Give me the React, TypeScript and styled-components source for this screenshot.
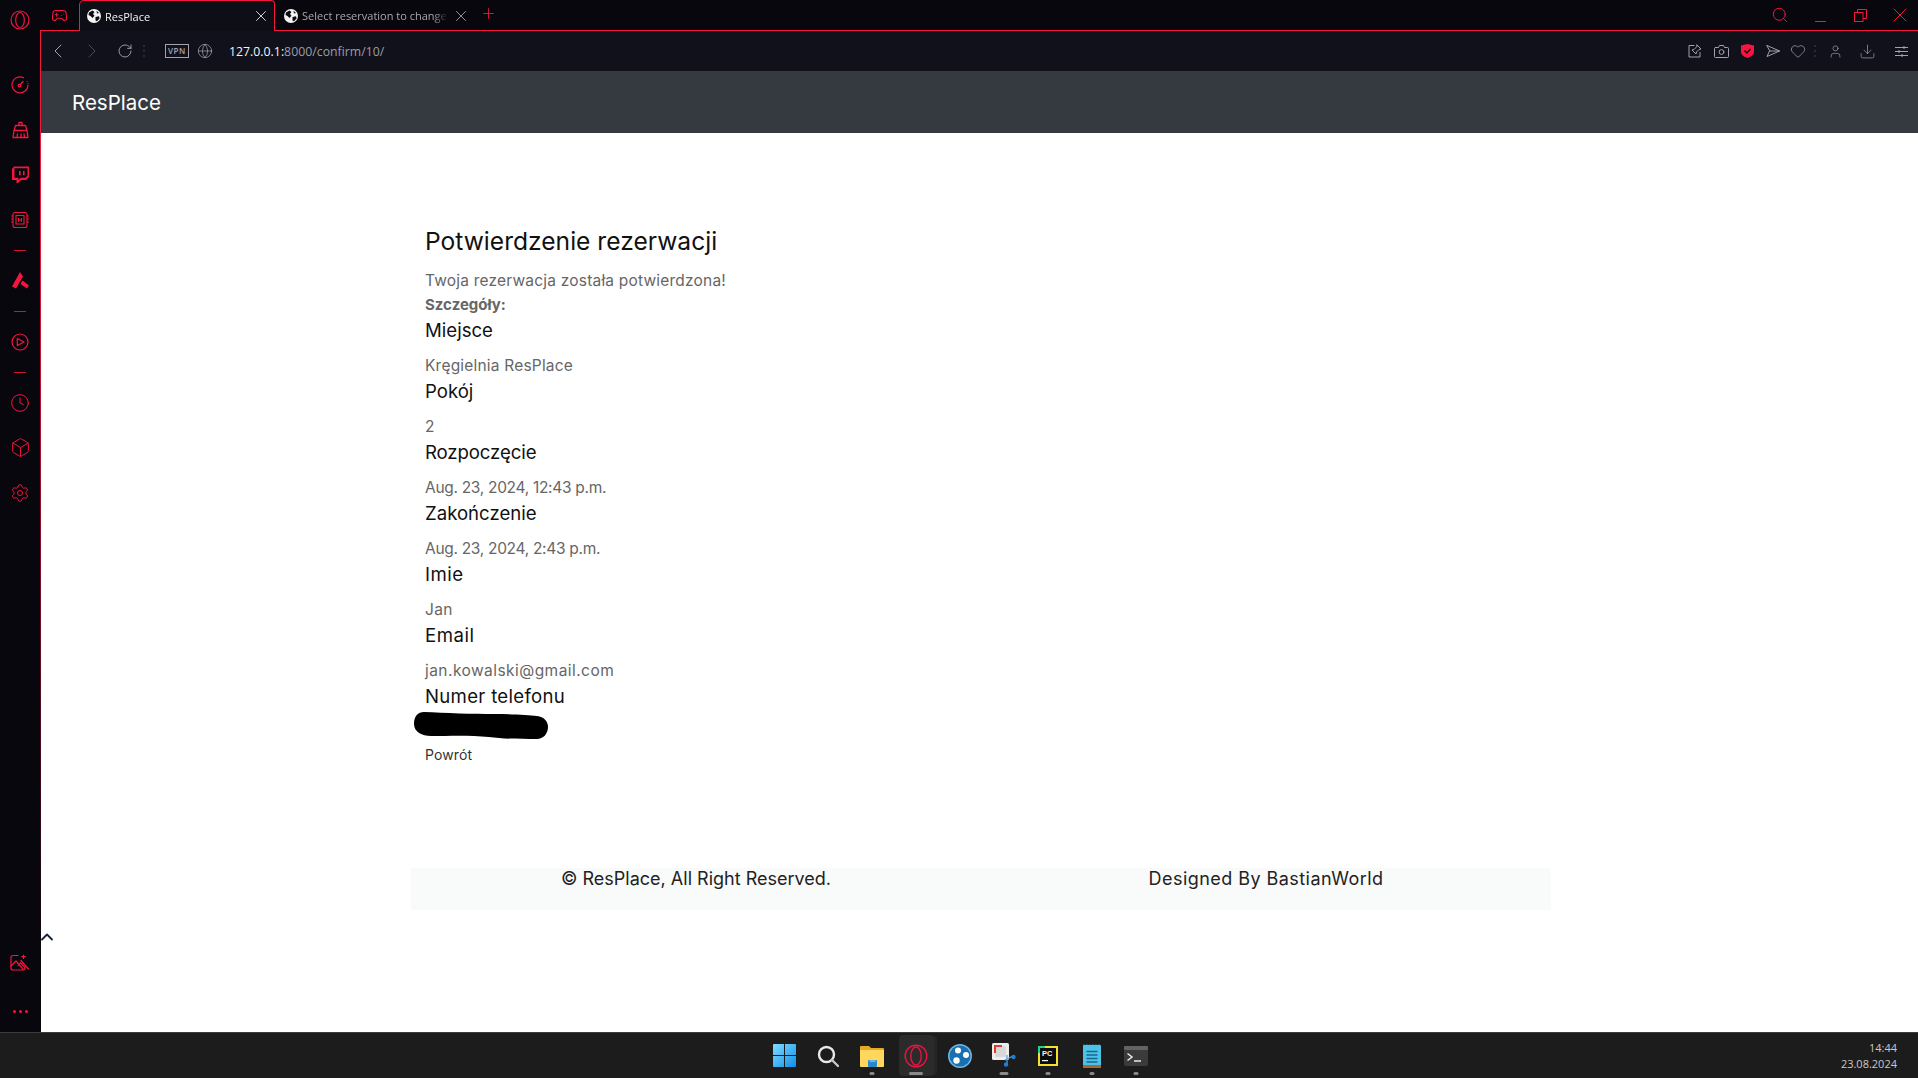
import React from "react";
import styled, { createGlobalStyle } from "styled-components";
import {
  Box,
  ChevronLeft,
  ChevronRight,
  ChevronUp,
  Clock,
  Download,
  Gamepad2,
  Globe,
  Heart,
  Plus,
  RotateCw,
  Search,
  Settings,
  User,
  X,
} from "lucide-react";

const RED = "#f5153f";
const POPPINS = `"Inter", "Liberation Sans", sans-serif`;
const SEGOE = `"Open Sans", "Liberation Sans", sans-serif`;

const GlobalStyle = createGlobalStyle`
  html, body { margin: 0; padding: 0; background: #fff; }
  #root { width: 1918px; height: 1078px; overflow: hidden; }
`;

const Screen = styled.div`
  width: 1918px;
  height: 1078px;
  display: grid;
  grid-template-rows: 1032px 46px;
  font-family: ${POPPINS};
`;

const Desktop = styled.div`
  display: grid;
  grid-template-columns: 40px 1fr;
  min-height: 0;
`;

const Sidebar = styled.aside`
  background: #07070d;
  display: flex;
  flex-direction: column;
  align-items: center;
  color: ${RED};
`;

const SideLogo = styled.div`
  height: 40px;
  display: flex;
  align-items: center;
  justify-content: center;
  margin-bottom: 22px;
`;

const SideItem = styled.div`
  height: 45px;
  width: 40px;
  flex: none;
  display: flex;
  align-items: center;
  justify-content: center;
`;

const SideSep = styled.div`
  height: 16px;
  flex: none;
  display: flex;
  align-items: center;
  &::before {
    content: "";
    width: 12px;
    height: 1px;
    background: ${RED};
    opacity: 0.85;
  }
`;

const SideBottom = styled.div`
  margin-top: auto;
  display: flex;
  flex-direction: column;
  align-items: center;
  gap: 5px;
`;

const SideDots = styled.div`
  height: 42px;
  display: flex;
  align-items: center;
  gap: 3px;
  span {
    width: 3px;
    height: 3px;
    border-radius: 50%;
    background: ${RED};
  }
`;

const Browser = styled.div`
  display: grid;
  grid-template-rows: 31px 40px 1fr;
  min-width: 0;
  position: relative;
`;

const TabStrip = styled.div`
  background: #07070d;
  display: flex;
  align-items: stretch;
  border-bottom: 1px solid ${RED};
  box-sizing: border-box;
  height: 31px;
  color: ${RED};
`;

const GameSlot = styled.div`
  width: 39px;
  display: flex;
  align-items: center;
  justify-content: center;
  flex: none;
`;

const Tab = styled.div<{ $active?: boolean }>`
  box-sizing: border-box;
  width: ${(p) => (p.$active ? "196px" : "197px")};
  margin-left: ${(p) => (p.$active ? "0" : "2px")};
  height: 31px;
  flex: none;
  display: flex;
  align-items: center;
  padding: 0 4px 0 7px;
  gap: 4px;
  font-family: ${SEGOE};
  font-size: 11px;
  color: ${(p) => (p.$active ? "#f2f2f5" : "#a7a7ad")};
  background: ${(p) => (p.$active ? "#0e0e16" : "transparent")};
  ${(p) =>
    p.$active
      ? `border: 1px solid ${RED}; border-bottom: 0; border-radius: 5px 4px 0 0;`
      : ""}
`;

const TabTitle = styled.span`
  flex: 1;
  overflow: hidden;
  white-space: nowrap;
  mask-image: linear-gradient(to right, #000 90%, transparent);
`;

const PlusSlot = styled.div`
  display: flex;
  align-items: center;
  margin-left: 6px;
  padding-bottom: 3px;
`;

const WindowButtons = styled.div`
  margin-left: auto;
  margin-right: -2px;
  display: flex;
  align-items: center;
`;

const WindowButton = styled.div`
  width: 40px;
  display: flex;
  justify-content: center;
  align-items: center;
`;

const AddressBar = styled.div`
  background: #11111b;
  border-left: 1px solid ${RED};
  display: flex;
  align-items: center;
  color: #a2a2b0;
`;

const NavButton = styled.div<{ $dim?: boolean; $w: number }>`
  width: ${(p) => p.$w}px;
  flex: none;
  display: flex;
  justify-content: center;
  align-items: center;
  opacity: ${(p) => (p.$dim ? 0.4 : 1)};
`;

const VpnBadge = styled.div`
  box-sizing: border-box;
  width: 24px;
  height: 14px;
  border: 1px solid #a3a3b0;
  font-family: ${SEGOE};
  font-size: 8px;
  font-weight: 600;
  letter-spacing: 0.6px;
  line-height: 12px;
  text-align: center;
  color: #a3a3b0;
  flex: none;
  margin-left: 18px;
`;

const Url = styled.div`
  margin-left: 8px;
  font-family: ${SEGOE};
  font-size: 12.3px;
  color: #9d9da6;
  white-space: nowrap;
  b {
    font-weight: 500;
    color: #f4f4f6;
  }
`;

const Tools = styled.div`
  margin-left: auto;
  display: flex;
  align-items: center;
  height: 100%;
`;

const Tool = styled.div<{ $w: number }>`
  width: ${(p) => p.$w}px;
  display: flex;
  justify-content: center;
  align-items: center;
`;

const DotsV = styled.div<{ $wide?: boolean }>`
  display: flex;
  flex-direction: column;
  gap: 3px;
  margin: 0 ${(p) => (p.$wide ? "4px" : "2px")};
  span {
    width: 2px;
    height: 2px;
    background: #2a2a35;
  }
`;

const Page = styled.div`
  background: #fff;
  border-left: 1px solid;
  border-image: linear-gradient(${RED} 0%, ${RED} 15%, #07070d 92%) 1;
  display: flex;
  flex-direction: column;
  min-height: 0;
`;

const Navbar = styled.nav`
  height: 62px;
  flex: none;
  background: #343a40;
  display: flex;
  align-items: center;
  padding-left: 31px;
  color: #fff;
  font-size: 20.5px;
  font-weight: 400;
`;

const Container = styled.main`
  width: 1140px;
  box-sizing: border-box;
  margin: 0 0 0 370px;
  padding: 92px 14px 0;
`;

const Title = styled.h3`
  margin: 0 0 11.5px;
  font-size: 24.6px;
  line-height: 32px;
  font-weight: 400;
  color: #111;
`;

const Lead = styled.p`
  margin: 0;
  font-size: 15.5px;
  line-height: 24px;
  letter-spacing: 0.2px;
  color: #666;
`;

const Strong = styled(Lead)`
  font-size: 15px;
  letter-spacing: 0;
  font-weight: 700;
`;

const Label = styled.h5<{ $track?: number }>`
  margin: 2px 0 13px;
  font-size: 18.6px;
  line-height: 22px;
  font-weight: 400;
  letter-spacing: ${(p) => p.$track ?? 0}px;
  color: #111;
`;

const Value = styled.p<{ $track: number }>`
  margin: 0;
  font-size: 15.5px;
  line-height: 24px;
  letter-spacing: ${(p) => p.$track}px;
  color: #666;
`;

const Redaction = styled.svg`
  display: block;
  margin: -8px 0 0 -11px;
`;

const BackLink = styled.a`
  display: block;
  margin-top: 6px;
  font-size: 14px;
  line-height: 20px;
  letter-spacing: 0.1px;
  color: #333;
`;

const Footer = styled.footer`
  margin: 103px 0 0 -14px;
  width: 1140px;
  height: 42px;
  box-sizing: border-box;
  padding-top: 1px;
  background: #f9fafa;
  display: grid;
  grid-template-columns: 1fr 1fr;
  justify-items: center;
  font-size: 18px;
  line-height: 20px;
  color: #222;
`;

const FooterText = styled.span<{ $track?: number }>`
  letter-spacing: ${(p) => p.$track ?? 0}px;
`;

const ScrollArrow = styled.div`
  position: absolute;
  left: -3px;
  top: 927px;
  color: #14233a;
  display: flex;
`;

const Taskbar = styled.footer`
  background: #1c1c1c;
  border-top: 1px solid #3c3c3c;
  box-sizing: border-box;
  display: grid;
  grid-template-columns: 1fr auto 1fr;
  align-items: center;
  padding-left: 2px;
`;

const TaskIcons = styled.div`
  grid-column: 2;
  display: flex;
  align-items: center;
`;

const TaskIcon = styled.div<{ $active?: boolean; $pin?: number }>`
  width: ${(p) => (p.$active ? "35px" : "44px")};
  height: 41px;
  margin: 0 ${(p) => (p.$active ? "4.5px" : "0")};
  display: flex;
  align-items: center;
  justify-content: center;
  position: relative;
  border-radius: 4px;
  background: ${(p) => (p.$active ? "#2b2b2b" : "transparent")};
  box-shadow: ${(p) => (p.$active ? "4px 0 0 -1px #262626" : "none")};
  &::after {
    content: "";
    display: ${(p) => (p.$pin ? "block" : "none")};
    position: absolute;
    left: 50%;
    bottom: 1px;
    transform: translateX(-50%);
    width: ${(p) => p.$pin}px;
    height: 3px;
    border-radius: 2px;
    background: #8a8a8a;
  }
`;

const Clocks = styled.div`
  grid-column: 3;
  justify-self: end;
  padding-right: 21px;
  font-family: ${SEGOE};
  font-size: 11px;
  line-height: 16px;
  color: #c9c9c9;
  text-align: right;
`;

const line = { fill: "none", stroke: "currentColor", strokeWidth: 1.5, strokeLinecap: "round", strokeLinejoin: "round" } as const;

const OperaLogo = ({ size = 20, color = RED }: { size?: number; color?: string }) => (
  <svg width={size} height={size} viewBox="0 0 24 24" fill="none" stroke={color} strokeWidth="1.4">
    <circle cx="12" cy="12" r="10.8" />
    <ellipse cx="12" cy="12" rx="5.2" ry="9" />
  </svg>
);

const FavGlobe = () => (
  <svg width="14" height="14" viewBox="0 0 14 14" style={{ flex: "none" }}>
    <circle cx="7" cy="7" r="7" fill="#f4f4f4" />
    <path d="M2 3.5 5.5 1.5 7.5 3 6 5 7.5 6.8 5.5 9 3.5 7 1.5 6ZM8.5 8 12 7.2 12.6 9.5 10 12.3 8.5 11.5Z M9.5 1.8 12 4 10 4.6Z" fill="#0b0b12" />
  </svg>
);

const Gauge = () => (
  <svg width="18" height="18" viewBox="0 0 18 18" {...line} strokeWidth={1.2}>
    <path d="M12.5 1.7A8 8 0 1 0 17 9" />
    <path d="M16 5.5v.01M17 7.3v.01" />
    <circle cx="8.5" cy="9.5" r="1.3" />
    <path d="M9.5 8.5 12 5.5" />
  </svg>
);

const Broom = () => (
  <svg width="17" height="18" viewBox="0 0 17 18" {...line} strokeWidth={1.3}>
    <path d="M7 4V1.500h3V4M3.500 4.500h10l1.500 5H2zM2 9.500 1 16.500h15l-1-7M5.500 13l-.5 3.500M9 13v3.500M12 13l.5 3.500" />
  </svg>
);

const Twitch = () => (
  <svg width="17" height="18" viewBox="0 0 17 18">
    <path fill={RED} fillRule="evenodd" d="M2 .5h15v10.500l-3 3H9l-3 3H4.500v-3H0V3zM2.500 2.300V11.800h4v2.300l2.200-2.300h4.800l2-2V2.300z" />
    <path fill={RED} d="M7 5h1.600v4.300H7zM11 5h1.600v4.300H11z" />
  </svg>
);

const Chip = () => (
  <svg width="18" height="18" viewBox="0 0 18 18" {...line} strokeWidth={1.1} strokeLinecap="butt">
    <rect x="2" y="1.500" width="14" height="15" rx="2" />
    <rect x="5" y="4.500" width="8" height="8.500" />
    <path d="M7.500 7v3.800M10.500 7v3.800M7.500 9h3M0 5h2M0 8h2M0 11h2M16 5h2M16 8h2M16 11h2" />
  </svg>
);

const Aria = () => (
  <svg width="17" height="17" viewBox="0 0 17 17">
    <path fill={RED} d="M8 0 11 4.500 4 16.500 0 14.500zM10.500 8.500 17 13.500 15 16.500 8.500 12z" />
  </svg>
);

const PlayCircle = () => (
  <svg width="18" height="18" viewBox="0 0 18 18" {...line} strokeWidth={1.2}>
    <circle cx="9" cy="9" r="8" />
    <path d="M6.300 5.500 13 9l-6.700 3.500z" />
  </svg>
);

const Wallpaper = () => (
  <svg width="20" height="18" viewBox="0 0 20 18" {...line} strokeWidth={1.2}>
    <path d="M8 1.500H3a2 2 0 0 0-2 2V14a2 2 0 0 0 2 2h10a2 2 0 0 0 2-2v-1" />
    <path d="M1 12l5-5 7 8M8 11.500 10.500 9l4 4M11 6.500l7.500 8.500M13.500 1v3.500M11.800 2.700h3.400" />
  </svg>
);

const Restore = () => (
  <svg width="13" height="13" viewBox="0 0 13 13" fill="none" stroke={RED} strokeWidth="1">
    <rect x="0.500" y="3.500" width="8.500" height="9" />
    <path d="M3.500 3.500V.5h9v9H9" />
  </svg>
);

const Pencil = () => (
  <svg width="14" height="14" viewBox="0 0 14 14" {...line} strokeWidth={1}>
    <path d="M6 1.500H1v11.500h11V8.500M9 1l4 4-2 .5-2.500 2.500-.5 2-4-4 2-.5L8.500 3z" />
  </svg>
);

const Camera = () => (
  <svg width="15" height="13" viewBox="0 0 15 13" {...line} strokeWidth={1}>
    <path d="M1.500 2.500h3l1-2h4l1 2h3a1 1 0 0 1 1 1v8a1 1 0 0 1-1 1h-12a1 1 0 0 1-1-1v-8a1 1 0 0 1 1-1z" />
    <circle cx="7.500" cy="7" r="2.400" />
  </svg>
);

const Shield = () => (
  <svg width="13" height="14" viewBox="0 0 13 14">
    <path fill={RED} d="M0 1.500 6.500 0 13 1.500v6.500c0 3-3.500 5-6.500 6C3.500 13 0 11 0 8z" />
    <path d="M3.500 6.500 5.800 9 9.500 5" fill="none" stroke="#11111b" strokeWidth="1.500" />
  </svg>
);

const Plane = () => (
  <svg width="14" height="12" viewBox="0 0 14 12" {...line} strokeWidth={1}>
    <path d="M1 .5 13.500 6 1 11.500 3.500 6zM3.500 6h10" />
  </svg>
);

const Sliders = () => (
  <svg width="13" height="11" viewBox="0 0 13 11" fill="none" stroke="currentColor" strokeWidth="1">
    <path d="M0 1.500h13M0 5.500h13M0 9.500h13M9 0v3M4 4v3M7 8v3" />
  </svg>
);

const WindowsLogo = () => (
  <svg width="23" height="23" viewBox="0 0 23 23">
    <defs>
      <linearGradient id="win" x1="0" y1="0" x2="1" y2="1">
        <stop offset="0" stopColor="#7fdcff" />
        <stop offset="1" stopColor="#0f8fe8" />
      </linearGradient>
    </defs>
    <path fill="url(#win)" d="M0 1a1 1 0 0 1 1-1h10v11H0zM12 0h10a1 1 0 0 1 1 1v10H12zM0 12h11v11H1a1 1 0 0 1-1-1zM12 12h11v10a1 1 0 0 1-1 1H12z" />
  </svg>
);

const TaskSearch = () => (
  <svg width="22" height="22" viewBox="0 0 22 22" fill="none">
    <circle cx="9.500" cy="9.500" r="7.500" stroke="#e8e8e8" strokeWidth="2.400" />
    <path d="M15 15l6 6" stroke="#c8c8c8" strokeWidth="2.400" strokeLinecap="round" />
  </svg>
);

const Folder = () => (
  <svg width="24" height="22" viewBox="0 0 24 22">
    <path fill="#e8a91f" d="M0 2a1 1 0 0 1 1-1h8l2 2h12a1 1 0 0 1 1 1v4H0z" />
    <path fill="#ffd75e" d="M0 5h24v16a1 1 0 0 1-1 1H1a1 1 0 0 1-1-1z" />
    <rect x="8" y="15" width="9" height="7" rx="1" fill="#2a86cf" />
    <rect x="9.500" y="15" width="6" height="2" fill="#63b7ea" />
  </svg>
);

const Sourcetree = () => (
  <svg width="24" height="24" viewBox="0 0 24 24">
    <circle cx="12" cy="12" r="12" fill="#6db5e8" />
    <circle cx="12" cy="12" r="10.500" fill="#1a6fb0" />
    <circle cx="10" cy="6.500" r="3" fill="#fff" />
    <circle cx="18" cy="11" r="3" fill="#fff" />
    <circle cx="8.500" cy="16.500" r="3.200" fill="#fff" />
  </svg>
);

const Snip = () => (
  <svg width="25" height="25" viewBox="0 0 25 25">
    <rect x="0" y="0" width="17" height="17" rx="1.500" fill="#ededed" />
    <rect x="3" y="3" width="11" height="11" fill="#d8d8d8" />
    <path d="M2 2h8v2H4v6H2z" fill="#d8412e" />
    <path d="M15 12v11M13 17l8-4" stroke="#4ba3e8" strokeWidth="1.200" fill="none" />
    <circle cx="14" cy="21.500" r="2.200" fill="#1f7fd0" />
    <circle cx="21.500" cy="14" r="2.200" fill="#1f7fd0" />
  </svg>
);

const PyCharm = () => (
  <svg width="20" height="20" viewBox="0 0 20 20">
    <rect width="20" height="20" fill="#f4e12c" />
    <rect x="0" y="0" width="7" height="7" fill="#23d18b" />
    <rect x="2" y="2" width="16" height="16" fill="#0c0c0c" />
    <text x="4" y="10" fontFamily="Liberation Sans, sans-serif" fontSize="7.500" fontWeight="700" fill="#f2f2f2">PC</text>
    <rect x="4" y="14" width="6" height="1.200" fill="#f2f2f2" />
  </svg>
);

const Notepad = () => (
  <svg width="18" height="24" viewBox="0 0 18 24">
    <rect y="1" width="18" height="21" rx="1" fill="#4ec1e6" />
    <rect y="21" width="18" height="3" fill="#a86a2a" />
    <path d="M1 1v-1M4 1v-1M7 1v-1M10 1v-1M13 1v-1M16 1v-1" stroke="#2a7f9f" />
    <path d="M3.500 7.500h11M3.500 11h11M3.500 14.500h11M3.500 18h11" stroke="#176a8e" strokeWidth="1.300" />
  </svg>
);

const Terminal = () => (
  <svg width="24" height="20" viewBox="0 0 24 20">
    <rect width="24" height="20" rx="2" fill="#3b3b3b" />
    <rect width="24" height="4" rx="1" fill="#636363" />
    <path d="M3.500 7.500 8 11l-4.500 3.500" stroke="#eaeaea" strokeWidth="1.500" fill="none" />
    <path d="M10 15h7" stroke="#eaeaea" strokeWidth="1.500" />
  </svg>
);

const details = [
  { label: "Miejsce", labelTrack: 0, value: "Kręgielnia ResPlace", track: 0.2 },
  { label: "Pokój", labelTrack: 0, value: "2", track: 0 },
  { label: "Rozpoczęcie", labelTrack: -0.1, value: "Aug. 23, 2024, 12:43 p.m.", track: -0.3 },
  { label: "Zakończenie", labelTrack: 0, value: "Aug. 23, 2024, 2:43 p.m.", track: -0.3 },
  { label: "Imie", labelTrack: 0.5, value: "Jan", track: 0.3 },
  { label: "Email", labelTrack: 0.5, value: "jan.kowalski@gmail.com", track: 0.45 },
];

export default function App() {
  return (
    <Screen>
      <GlobalStyle />
      <Desktop>
        <Sidebar>
          <SideLogo>
            <OperaLogo />
          </SideLogo>
          <SideItem><Gauge /></SideItem>
          <SideItem><Broom /></SideItem>
          <SideItem><Twitch /></SideItem>
          <SideItem><Chip /></SideItem>
          <SideSep />
          <SideItem><Aria /></SideItem>
          <SideSep />
          <SideItem><PlayCircle /></SideItem>
          <SideSep />
          <SideItem><Clock size={20} strokeWidth={1.2} /></SideItem>
          <SideItem><Box size={21} strokeWidth={1.1} /></SideItem>
          <SideItem><Settings size={20} strokeWidth={1.2} /></SideItem>
          <SideBottom>
            <SideItem><Wallpaper /></SideItem>
            <SideDots><span /><span /><span /></SideDots>
          </SideBottom>
        </Sidebar>
        <Browser>
          <TabStrip>
            <GameSlot><Gamepad2 size={17} strokeWidth={1.5} /></GameSlot>
            <Tab $active>
              <FavGlobe />
              <TabTitle>ResPlace</TabTitle>
              <X size={18} color="#e8e8ec" strokeWidth={1.2} />
            </Tab>
            <Tab>
              <FavGlobe />
              <TabTitle>Select reservation to change</TabTitle>
              <X size={18} color="#a0a0a8" strokeWidth={1.2} />
            </Tab>
            <PlusSlot><Plus size={17} color={RED} strokeWidth={1.2} /></PlusSlot>
            <WindowButtons>
              <WindowButton><Search size={18} strokeWidth={1.3} /></WindowButton>
              <WindowButton>
                <svg width="13" height="14" viewBox="0 0 13 14"><path d="M1 13.500h11" stroke={RED} /></svg>
              </WindowButton>
              <WindowButton><Restore /></WindowButton>
              <WindowButton><X size={24} strokeWidth={1} /></WindowButton>
            </WindowButtons>
          </TabStrip>
          <AddressBar>
            <NavButton $w={34}><ChevronLeft size={24} strokeWidth={1} /></NavButton>
            <NavButton $w={33} $dim><ChevronRight size={24} strokeWidth={1} /></NavButton>
            <NavButton $w={33}><RotateCw size={16} strokeWidth={1.4} /></NavButton>
            <DotsV><span /><span /><span /></DotsV>
            <VpnBadge>VPN</VpnBadge>
            <NavButton $w={32}><Globe size={16} strokeWidth={1.1} /></NavButton>
            <Url><b>127.0.0.1:</b>8000/confirm/10/</Url>
            <Tools>
              <Tool $w={26}><Pencil /></Tool>
              <Tool $w={26}><Camera /></Tool>
              <Tool $w={26}><Shield /></Tool>
              <Tool $w={26}><Plane /></Tool>
              <Tool $w={24}><Heart size={16} strokeWidth={1.1} /></Tool>
              <DotsV $wide><span /><span /><span /></DotsV>
              <Tool $w={30}><User size={15} strokeWidth={1.1} /></Tool>
              <Tool $w={34}><Download size={17} strokeWidth={1} /></Tool>
              <Tool $w={34}><Sliders /></Tool>
            </Tools>
          </AddressBar>
          <Page>
            <Navbar>ResPlace</Navbar>
            <Container>
              <Title>Potwierdzenie rezerwacji</Title>
              <Lead>Twoja rezerwacja została potwierdzona!</Lead>
              <Strong>Szczegóły:</Strong>
              {details.map((d) => (
                <React.Fragment key={d.label}>
                  <Label $track={d.labelTrack}>{d.label}</Label>
                  <Value $track={d.track}>{d.value}</Value>
                </React.Fragment>
              ))}
              <Label $track={0.3}>Numer telefonu</Label>
              <Redaction width="134" height="27" viewBox="0 0 134 27">
                <path fill="#000" d="M10 0C30 1 60 2 80 2c18 0 34 1 43 2 7 1 11 5 11 11 0 7-5 12-11 12-16 0-34 0-48-2-20-2-40-1-58-1C8 24 0 20 0 12 0 4 4 0 10 0z" />
              </Redaction>
              <BackLink>Powrót</BackLink>
              <Footer>
                <FooterText>© ResPlace, All Right Reserved.</FooterText>
                <FooterText $track={0.45}>Designed By BastianWorld</FooterText>
              </Footer>
            </Container>
            <ScrollArrow><ChevronUp size={20} strokeWidth={2.2} /></ScrollArrow>
          </Page>
        </Browser>
      </Desktop>
      <Taskbar>
        <TaskIcons>
          <TaskIcon><WindowsLogo /></TaskIcon>
          <TaskIcon><TaskSearch /></TaskIcon>
          <TaskIcon $pin={5}><Folder /></TaskIcon>
          <TaskIcon $active $pin={14}><OperaLogo size={24} color="#e8143f" /></TaskIcon>
          <TaskIcon><Sourcetree /></TaskIcon>
          <TaskIcon $pin={9}><Snip /></TaskIcon>
          <TaskIcon $pin={5}><PyCharm /></TaskIcon>
          <TaskIcon $pin={5}><Notepad /></TaskIcon>
          <TaskIcon $pin={5}><Terminal /></TaskIcon>
        </TaskIcons>
        <Clocks>
          14:44
          <br />
          23.08.2024
        </Clocks>
      </Taskbar>
    </Screen>
  );
}
